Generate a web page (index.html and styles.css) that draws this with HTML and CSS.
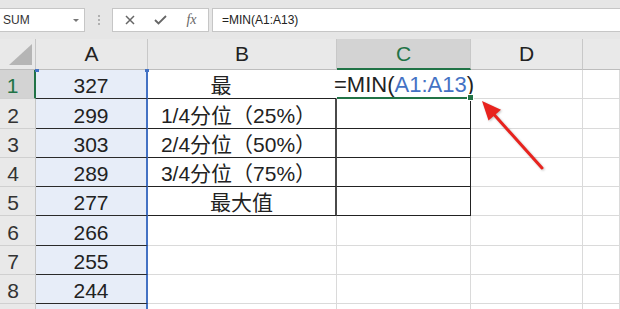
FILE: index.html
```html
<!DOCTYPE html>
<html lang="zh">
<head>
    <meta charset="UTF-8">
    <title>MIN</title>
    <link rel="stylesheet" href="styles.css">
</head>
<body>
    <div class="formula-bar">
        <div class="name-box">
            <span>SUM</span>
            <span class="caret"></span>
        </div>
        <div class="grip"><i></i><i></i><i></i></div>
        <div class="fx-buttons">
            <svg width="10" height="10" viewBox="0 0 10 10"><path d="M1 1 L9 9 M9 1 L1 9" stroke="#666" stroke-width="1.5" fill="none"/></svg>
            <svg width="13" height="10" viewBox="0 0 13 10"><path d="M1 5 L4.5 8.5 L12 1" stroke="#666" stroke-width="1.8" fill="none"/></svg>
            <span class="fx">fx</span>
        </div>
        <div class="formula-input">=MIN(A1:A13)</div>
    </div>

    <div class="sheet">
        <div class="corner"><div class="tri"></div></div>
        <div class="ch">A</div>
        <div class="ch">B</div>
        <div class="ch sel">C</div>
        <div class="ch">D</div>
        <div class="ch last"></div>

        <!-- row 1 -->
        <div class="rh sel">1</div>
        <div class="cell a a1">327</div>
        <div class="cell t b1"><span class="stub">最</span></div>
        <div class="cell edit">=MIN(<span class="ref">A1:A13</span>)</div>
        <div class="cell"></div>
        <div class="cell"></div>

        <div class="rh">2</div>
        <div class="cell a">299</div>
        <div class="cell t b q">1/4分位（25%）</div>
        <div class="cell t"></div>
        <div class="cell"></div>
        <div class="cell"></div>

        <div class="rh">3</div>
        <div class="cell a">303</div>
        <div class="cell t b q">2/4分位（50%）</div>
        <div class="cell t"></div>
        <div class="cell"></div>
        <div class="cell"></div>

        <div class="rh">4</div>
        <div class="cell a">289</div>
        <div class="cell t b q">3/4分位（75%）</div>
        <div class="cell t"></div>
        <div class="cell"></div>
        <div class="cell"></div>

        <div class="rh">5</div>
        <div class="cell a">277</div>
        <div class="cell t b">最大值</div>
        <div class="cell t"></div>
        <div class="cell"></div>
        <div class="cell"></div>

        <div class="rh">6</div>
        <div class="cell a">266</div>
        <div class="cell"></div>
        <div class="cell"></div>
        <div class="cell"></div>
        <div class="cell"></div>

        <div class="rh">7</div>
        <div class="cell a">255</div>
        <div class="cell"></div>
        <div class="cell"></div>
        <div class="cell"></div>
        <div class="cell"></div>

        <div class="rh">8</div>
        <div class="cell a">244</div>
        <div class="cell"></div>
        <div class="cell"></div>
        <div class="cell"></div>
        <div class="cell"></div>

        <!-- row 9, only a sliver shows -->
        <div class="rh"></div>
        <div class="cell a"></div>
        <div class="cell"></div>
        <div class="cell"></div>
        <div class="cell"></div>
        <div class="cell"></div>

        <!-- annotation arrow -->
        <svg class="arrow" width="80" height="80" viewBox="0 0 80 80">
            <line x1="24" y1="20.5" x2="72" y2="74" stroke="#e8231e" stroke-width="3" stroke-linecap="round"/>
            <polygon points="12,7 18.5,26.5 31,15.8" fill="#e8231e"/>
        </svg>
    </div>
</body>
</html>
```

FILE: styles.css
```css
* {
    margin: 0;
    padding: 0;
    box-sizing: border-box;
}

body {
    width: 620px;
    height: 309px;
    overflow: hidden;
    background: #fff;
    font-family: 'Liberation Sans', 'Noto Sans CJK SC', sans-serif;
    color: #222;
}

/* formula bar */
.formula-bar {
    display: flex;
    align-items: center;
    height: 39px;
    padding: 8px 0 7px;
    background: #e6e6e6;
}

.name-box {
    width: 86px;
    height: 24px;
    margin-left: -1px;
    padding-left: 3px;
    display: flex;
    align-items: center;
    justify-content: space-between;
    background: #fff;
    border: 1px solid #c6c6c6;
    font-size: 12px;
    color: #333;
}

.caret {
    border-left: 3px solid transparent;
    border-right: 3px solid transparent;
    border-top: 3px solid #777;
    margin-right: 5px;
}

.grip {
    width: 27px;
    display: flex;
    flex-direction: column;
    align-items: center;
    gap: 2px;
}

.grip i {
    width: 2px;
    height: 2px;
    background: #b0b0b0;
}

.fx-buttons {
    width: 97px;
    height: 24px;
    padding-left: 1px;
    display: grid;
    grid-template-columns: 31px 31px 31px;
    align-items: center;
    justify-items: center;
    background: #fff;
    border: 1px solid #c6c6c6;
}

.fx {
    font-family: 'Liberation Serif', serif;
    font-style: italic;
    font-size: 14px;
    color: #666;
}

.formula-input {
    flex: 1;
    height: 24px;
    margin-left: 3px;
    padding-left: 9px;
    display: flex;
    align-items: center;
    background: #fff;
    border: 1px solid #c6c6c6;
    border-right: none;
    font-size: 12px;
    color: #222;
}

/* sheet grid */
.sheet {
    position: relative;
    display: grid;
    grid-template-columns: 36px 112px 189px 134px 112px 1fr;
    grid-template-rows: 31px repeat(9, 29.3px);
    font-size: 21px;
}

.corner {
    display: flex;
    align-items: flex-end;
    justify-content: flex-end;
    padding: 0 3px 4px 0;
    background: #e9e9e9;
    border-right: 1px solid #c6c6c6;
    border-bottom: 1px solid #bdbdbd;
}

.tri {
    width: 23px;
    height: 21px;
    background: #b5b5b5;
    clip-path: polygon(100% 0, 100% 100%, 0 100%);
}

.ch {
    display: flex;
    align-items: center;
    justify-content: center;
    background: #e9e9e9;
    border-right: 1px solid #c8c8c8;
    border-bottom: 1px solid #bdbdbd;
    font-size: 21px;
    color: #222;
}

.ch.sel {
    background: #d3d3d3;
    border-bottom: 2px solid #217346;
    color: #217346;
}

.ch.last {
    border-right: none;
}

.rh {
    display: flex;
    align-items: flex-end;
    justify-content: center;
    padding-right: 9px;
    line-height: 24px;
    background: #e9e9e9;
    border-right: 1px solid #c6c6c6;
    border-bottom: 1px solid #d0d0d0;
    color: #333;
}

.rh.sel {
    background: #d3d3d3;
    border-right: 2px solid #217346;
    color: #217346;
}

.cell {
    display: flex;
    align-items: flex-end;
    justify-content: center;
    line-height: 24px;
    white-space: nowrap;
    border-right: 1px solid #dadada;
    border-bottom: 1px solid #dadada;
}

.cell.a {
    background: #e7edf8;
    border-right: 2px solid #4472c4;
    border-bottom: 1px solid #2a2a2a;
}

.cell.a1 {
    position: relative;
}

.cell.a1::before,
.cell.a1::after {
    content: '';
    position: absolute;
    top: -1px;
    width: 4px;
    height: 3px;
    background: #4472c4;
}

.cell.a1::before {
    left: -1px;
}

.cell.a1::after {
    right: -3px;
}

.cell.t {
    border-right: 1px solid #222;
    border-bottom: 1px solid #222;
}

.cell.b {
    border-right: 2px solid #4a4a4a;
}

.cell.q {
    padding-right: 6px;
}

.cell.b1 {
    border-right: 1px solid #fff;
}

.stub {
    width: 3em;
    text-align: left;
}

.cell.edit {
    position: relative;
    font-size: 22px;
    color: #222;
    border-right: none;
    border-bottom: 2px solid #217346;
}

.cell.edit::after {
    content: '';
    position: absolute;
    right: -3px;
    bottom: -4px;
    width: 5px;
    height: 5px;
    background: #217346;
    border: 1px solid #fff;
}

.ref {
    color: #4472c4;
}

.arrow {
    position: absolute;
    left: 470px;
    top: 55px;
    filter: drop-shadow(1px 1px 1px rgba(0, 0, 0, 0.25));
}
```
